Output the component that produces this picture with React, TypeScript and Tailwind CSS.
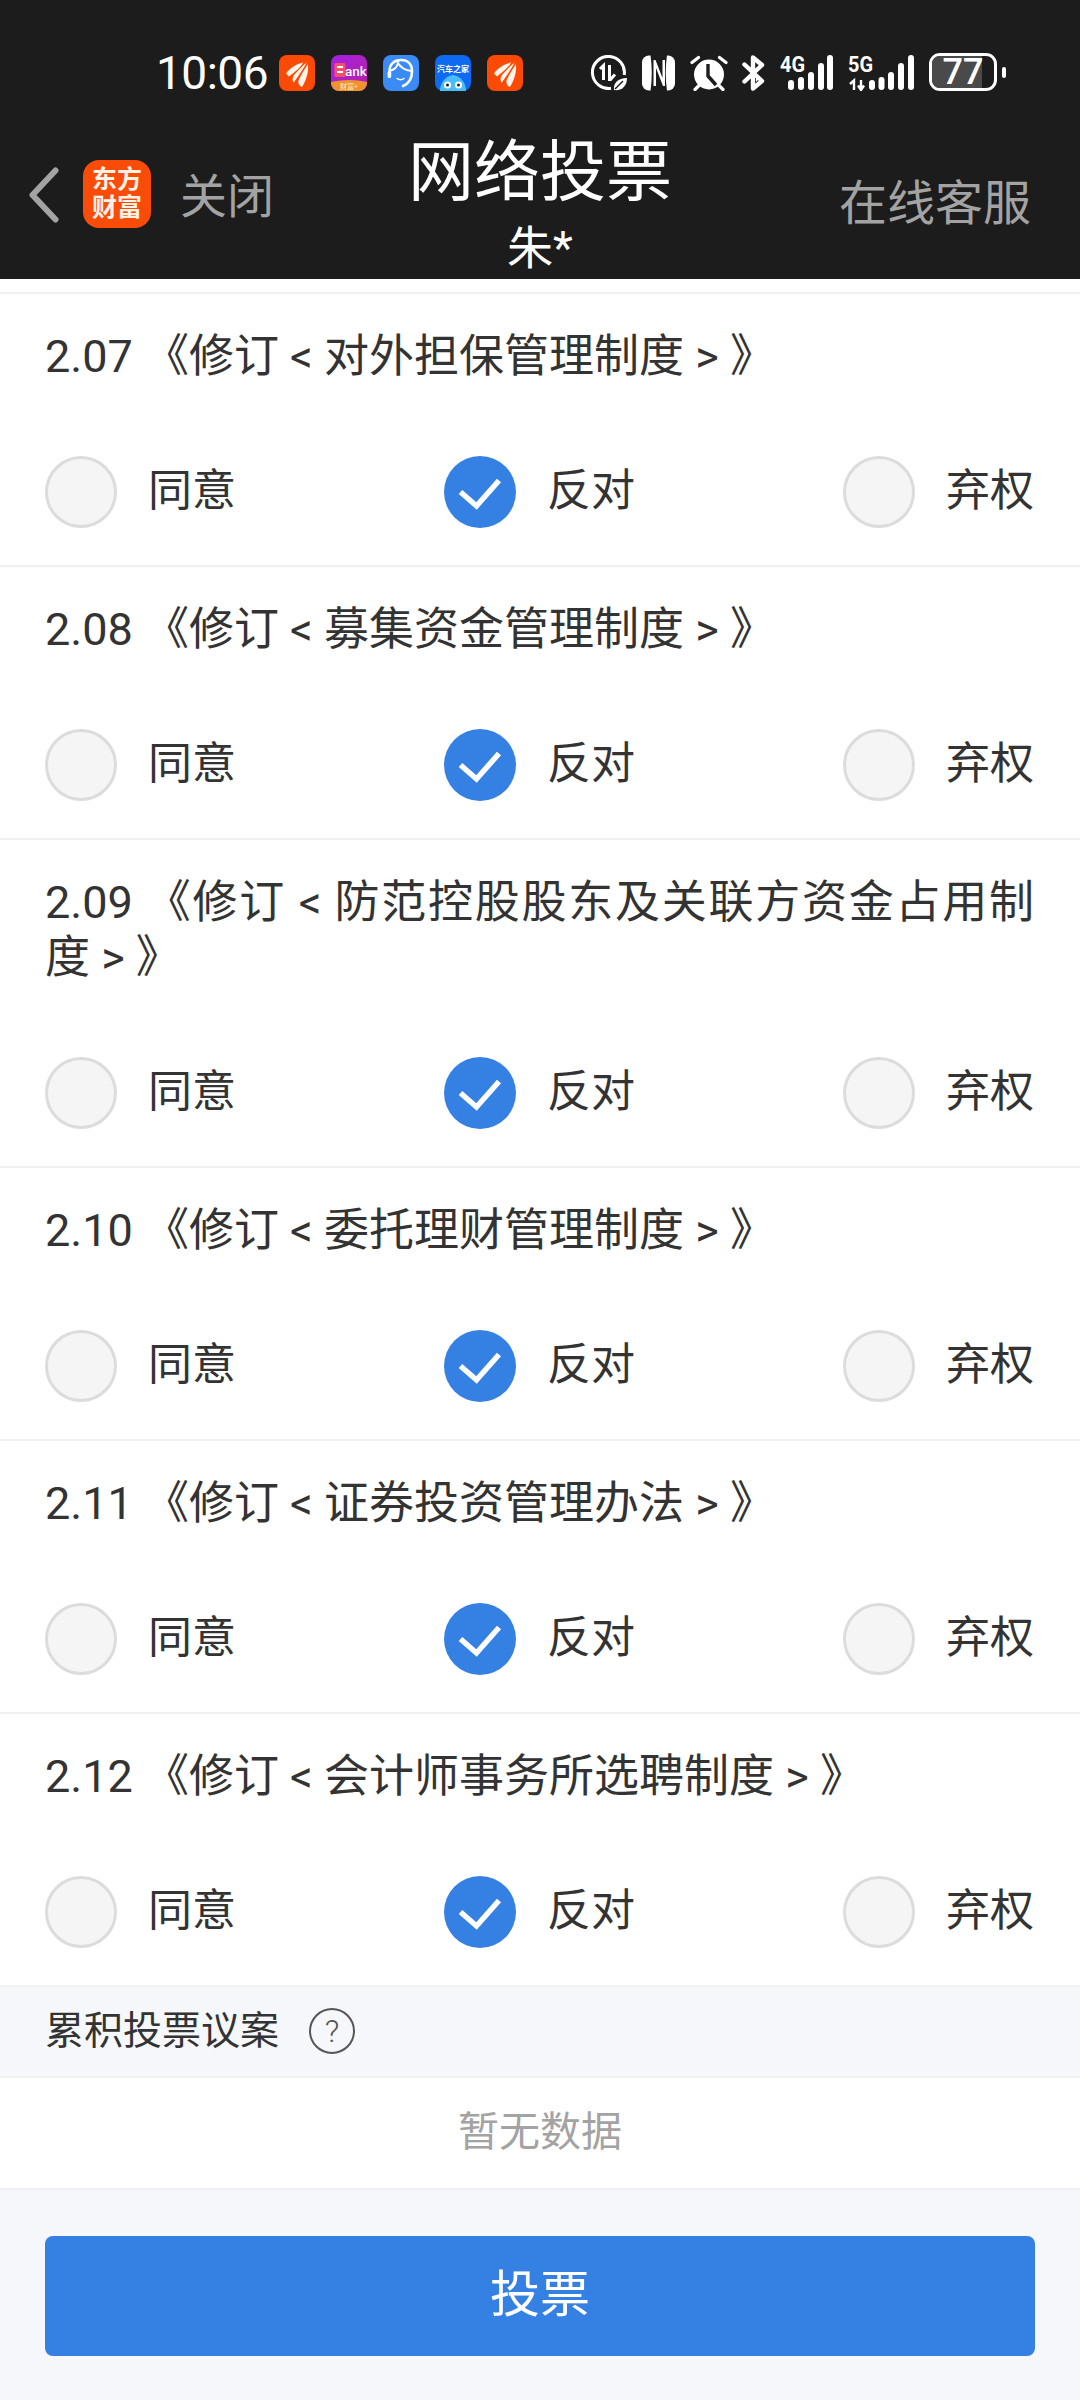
import React from "react";

const rows = [
  { no: "2.07", name: "《修订 < 对外担保管理制度 > 》" },
  { no: "2.08", name: "《修订 < 募集资金管理制度 > 》" },
  { no: "2.09", name: "《修订 < 防范控股股东及关联方资金占用制度 > 》" },
  { no: "2.10", name: "《修订 < 委托理财管理制度 > 》" },
  { no: "2.11", name: "《修订 < 证券投资管理办法 > 》" },
  { no: "2.12", name: "《修订 < 会计师事务所选聘制度 > 》" },
];

function Wing() {
  return (
    <svg width="36" height="36" viewBox="0 0 36 36" className="shrink-0">
      <rect width="36" height="36" rx="8" fill="#fb4a05" />
      <path d="M7 18.5C11 13 17 9 24 7.5C22 12 17 16 10 21.5Z" fill="#fff3ea" />
      <path d="M27.5 7.5C25 13 20 20 14.5 28C13 25 13.5 22 15 20C19 15.5 23 11 27.5 7.5Z" fill="#fff3ea" />
      <path d="M29 9C29.5 16 28 24 23 32C20 31 19 28 19.5 25.5C22 20 25.5 14 29 9Z" fill="#fff3ea" />
    </svg>
  );
}

function BankIcon() {
  return (
    <svg width="36" height="36" viewBox="0 0 36 36" className="shrink-0">
      <defs>
        <linearGradient id="bk" x1="0" y1="0" x2="1" y2="1">
          <stop offset="0" stopColor="#a322e0" />
          <stop offset="1" stopColor="#b81fa8" />
        </linearGradient>
      </defs>
      <rect width="36" height="36" rx="8" fill="url(#bk)" />
      <path d="M0 27Q18 23 36 27V28A8 8 0 0 1 28 36H8A8 8 0 0 1 0 28Z" fill="#ef9230" />
      <rect x="3.5" y="8" width="11" height="14" rx="1.5" fill="#f4506a" />
      <rect x="6" y="11" width="6" height="2" fill="#fff" />
      <rect x="6" y="16" width="6" height="2" fill="#fff" />
      <text x="14" y="21" fontSize="13.5" fontWeight="500" fill="#fff" fontFamily="Roboto">ank</text>
      <text x="18" y="34" fontSize="7" textAnchor="middle" fill="#fff3d0" fontFamily="'Noto Sans CJK SC'">财富+</text>
    </svg>
  );
}

function HeadsetIcon() {
  return (
    <svg width="36" height="36" viewBox="0 0 36 36" className="shrink-0">
      <rect width="36" height="36" rx="8" fill="#3a8bf5" />
      <path d="M6.5 21V16C6.5 9 11.5 5 18 5C24.5 5 29 9 29 16C29 23 26 28.5 20 31" fill="none" stroke="#fff" strokeWidth="2.6" strokeLinecap="round" />
      <path d="M8 15.5Q13.5 14 15 8Q19 15 28.5 16" fill="none" stroke="#fff" strokeWidth="2" />
      <path d="M14 23.5Q17.5 26 21 23.5" fill="none" stroke="#fff" strokeWidth="1.5" strokeLinecap="round" />
      <rect x="4.6" y="16" width="3.6" height="7" rx="1.5" fill="#fff" />
    </svg>
  );
}

function AutoHomeIcon() {
  return (
    <svg width="36" height="36" viewBox="0 0 36 36" className="shrink-0">
      <rect width="36" height="36" rx="8" fill="#0f6af2" />
      <text x="18" y="17" fontSize="8" fontWeight="700" textAnchor="middle" fill="#fff" fontFamily="'Noto Sans CJK SC'">汽车之家</text>
      <path d="M5 36C5 28 10 21 18 20C26 21 31 28 31 36Z" fill="#49bdf5" />
      <circle cx="12.5" cy="30" r="3.6" fill="#fff" />
      <circle cx="23.5" cy="30" r="3.6" fill="#fff" />
      <circle cx="12.5" cy="30" r="1.5" fill="#10224a" />
      <circle cx="23.5" cy="30" r="1.5" fill="#10224a" />
    </svg>
  );
}

function DataSaver() {
  return (
    <svg width="38" height="36" viewBox="0 0 38 36" className="shrink-0">
      <path d="M21 33.2A16 16 0 1 1 34.2 20" fill="none" stroke="#fff" strokeWidth="3" />
      <path d="M10 14L13.5 10.5V25" fill="none" stroke="#fff" strokeWidth="3" />
      <path d="M19.5 10V24.5H20.5L25 19.5" fill="none" stroke="#fff" strokeWidth="3" />
      <path d="M24 35C23 28 28 23 37 23C37 31 32 36 24 35Z" fill="#fff" />
      <path d="M25 34L33 26" stroke="#1c1c1c" strokeWidth="1.4" />
    </svg>
  );
}

function NfcIcon() {
  return (
    <svg width="33" height="36" viewBox="0 0 33 36" className="shrink-0">
      <rect x="0" y="0.5" width="33" height="35" rx="7" fill="#fff" />
      <path d="M8.5 0H25Q22.5 18 25 36H8.5Q11 18 8.5 0Z" fill="#1c1c1c" />
      <path d="M11.5 5V31H14V13L21 31H23V5H20.5V23L13.5 5Z" fill="#fff" />
    </svg>
  );
}

function AlarmIcon() {
  return (
    <svg width="38" height="36" viewBox="0 0 38 36" className="shrink-0">
      <circle cx="19" cy="19.5" r="15" fill="#fff" />
      <path d="M18 9V21L26 30" fill="none" stroke="#1c1c1c" strokeWidth="3.4" />
      <path d="M2 7.5L8.5 2.5M29.5 2.5L36 7.5M5 34.5L9.5 30M33 34.5L28.5 30" stroke="#fff" strokeWidth="3.2" strokeLinecap="round" />
    </svg>
  );
}

function BluetoothIcon() {
  return (
    <svg width="23" height="36" viewBox="0 0 23 36" className="shrink-0">
      <path d="M2.5 9.5L20 26L11 33.5V2.5L20 10L2.5 26.5" fill="none" stroke="#fff" strokeWidth="4.4" strokeLinejoin="round" strokeLinecap="round" />
      <path d="M14 19L18 23L14 27Z" fill="#fff" />
    </svg>
  );
}

function Signal({ kind }: { kind: "4G" | "5G" }) {
  const is5 = kind === "5G";
  const xs = is5 ? [24, 33.5, 43, 53, 63] : [11, 21, 31, 41, 50];
  const tops = [25, 22, 17, 8, 0];
  return (
    <svg width={is5 ? 67 : 54} height="36" viewBox={`0 0 ${is5 ? 67 : 54} 36`} className="shrink-0">
      <text x="0" y="17" fontSize="22" fontWeight="700" fill="#fff" fontFamily="Roboto" textLength="25" lengthAdjust="spacingAndGlyphs">{kind}</text>
      {xs.map((x, i) => (
        <rect key={x} x={x - 3} y={tops[i]} width="6" height={35 - tops[i]} rx="3" fill="#fff" />
      ))}
      {is5 && <path d="M2 29L6 25.5V35M13 25V34M10 30.5L13 35L16 30.5" fill="none" stroke="#fff" strokeWidth="2.4" />}
    </svg>
  );
}

function Radio({ checked }: { checked?: boolean }) {
  if (checked) {
    return (
      <svg width="72" height="72" viewBox="0 0 72 72" className="shrink-0">
        <circle cx="36" cy="36" r="36" fill="#3480e3" />
        <path d="M16.5 36L32.5 50L55 24.5" fill="none" stroke="#fff" strokeWidth="5.5" />
      </svg>
    );
  }
  return <div className="w-[72px] h-[72px] shrink-0 rounded-full bg-[#f5f5f5] border-[3px] border-[#dcdcdc]" />;
}

function Option({ label, checked }: { label: string; checked?: boolean }) {
  return (
    <div className="flex items-center gap-[31px]">
      <Radio checked={checked} />
      <span className="text-[44px] leading-[70px] pb-[2px] text-[#333333]">{label}</span>
    </div>
  );
}

export default function App() {
  return (
    <div className="w-[1080px] h-[2400px] overflow-hidden flex flex-col bg-[#f5f7fa] font-['Roboto','Noto_Sans_CJK_SC',sans-serif]">
      <header className="h-[279px] shrink-0 bg-[#1c1c1c] flex flex-col">
        <div className="h-[125px] pt-[55px] pl-[156px] flex items-start">
          <span className="text-[46px] leading-[36px] text-white w-[123px] font-normal tracking-[-0.5px]">10:06</span>
          <div className="flex gap-[16px]">
            <Wing />
            <BankIcon />
            <HeadsetIcon />
            <AutoHomeIcon />
            <Wing />
          </div>
          <div className="ml-[67px] flex items-start">
            <DataSaver />
            <div className="ml-[14px]"><NfcIcon /></div>
            <div className="ml-[15px]"><AlarmIcon /></div>
            <div className="ml-[14px]"><BluetoothIcon /></div>
            <div className="ml-[15px]"><Signal kind="4G" /></div>
            <div className="ml-[14px]"><Signal kind="5G" /></div>
            <div className="ml-[14px] -mt-[2px] flex items-center gap-[5px]">
              <div className="relative w-[68px] h-[38px] rounded-[11px] border-[3px] border-white overflow-hidden flex items-center justify-center">
                <div className="absolute left-0 top-0 bottom-0 w-[50px] bg-[#4a4a4a]" />
                <span className="relative text-[36px] leading-[32px] text-white font-medium">77</span>
              </div>
              <div className="w-[4px] h-[11px] rounded-full bg-white" />
            </div>
          </div>
        </div>
        <nav className="grid grid-cols-[1fr_auto_1fr] flex-1">
          <div className="flex items-start pl-[28px] pt-[35px]">
            <svg width="31" height="56" viewBox="0 0 31 56" className="mt-[7px] shrink-0">
              <path d="M27.5 3.5L4.5 28L27.5 52.5" fill="none" stroke="#a3a3a3" strokeWidth="6" strokeLinecap="round" strokeLinejoin="round" />
            </svg>
            <div className="ml-[24px] w-[68px] h-[68px] rounded-[16px] bg-[#f94c08] flex flex-col items-center justify-center text-[#fff1e6] text-[25px] leading-[28px] font-bold shrink-0">
              <span>东方</span>
              <span>财富</span>
            </div>
            <span className="ml-[29px] mt-[3px] text-[47px] leading-[68px] text-[#a3a3a3]">关闭</span>
          </div>
          <div className="flex flex-col items-center pt-[11px] text-white">
            <span className="text-[66px] leading-[74px]">网络投票</span>
            <span className="mt-[11px] text-[46px] leading-[54px]">朱*</span>
          </div>
          <div className="text-right pr-[49px] pt-[49px] text-[48px] leading-[60px] text-[#a3a3a3]">在线客服</div>
        </nav>
      </header>

      <main className="bg-white pt-[13px]">
        {rows.map((r) => (
          <section key={r.no} className="border-t-2 border-[#f0f0f0] pl-[45px] pr-[46px] pt-[36px] pb-[37px]">
            <p className="text-[45px] leading-[54.5px] text-[#333333] text-justify">
              {r.no} {r.name}
            </p>
            <div className="mt-[71.5px] flex justify-between">
              <Option label="同意" />
              <Option label="反对" checked />
              <Option label="弃权" />
            </div>
          </section>
        ))}
      </main>

      <div className="h-[93px] shrink-0 border-y-2 border-[#f0f1f3] bg-[#f5f7fa] pl-[45px] flex items-center">
        <span className="text-[39px] leading-[50px] text-[#333333]">累积投票议案</span>
        <span className="ml-[30px] w-[46px] h-[46px] rounded-full border-2 border-[#555555] flex items-center justify-center text-[32px] font-light text-[#555555]">?</span>
      </div>
      <div className="h-[112px] shrink-0 bg-white border-b-2 border-[#f0f1f3] flex items-center justify-center text-[41px] text-[#a3a3a3]">暂无数据</div>
      <div className="flex-1 px-[45px] pt-[46px]">
        <button className="w-full h-[120px] rounded-[8px] bg-[#3480e3] text-white text-[50px] flex items-center justify-center">投票</button>
      </div>
    </div>
  );
}
